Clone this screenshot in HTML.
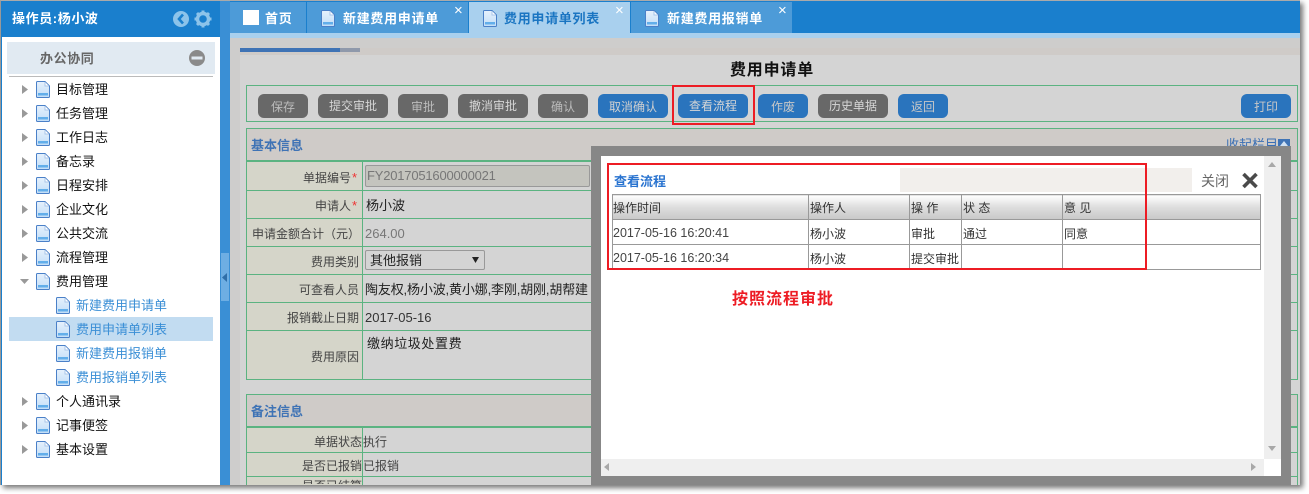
<!DOCTYPE html>
<html><head><meta charset="utf-8">
<style>
html,body{margin:0;padding:0;background:#fff;width:1309px;height:494px;overflow:hidden}
*{box-sizing:border-box}
body{font-family:"Liberation Sans","WenQuanYi Zen Hei","Noto Sans CJK SC",sans-serif;font-size:13px;color:#333}
.a{position:absolute}
.t{position:absolute;white-space:nowrap}
#win{position:absolute;left:0;top:0;width:1300px;height:485px;background:#cecece;border-top:1px solid #aaa;border-left:1px solid #999;box-shadow:3px 3px 5px #777;overflow:hidden}
.it{position:absolute;white-space:nowrap;font-size:13px;line-height:16px;color:#111}
.ch{color:#3b8fd6}
.btn{position:absolute;top:94px;height:24px;border-radius:6px;color:#d6d6d6;text-align:center;font-size:12px;line-height:25px}
.dim{color:#bcbcbc;line-height:27px}
.g{background:#686868}.b{background:#2a74bd}
.gl{position:absolute;background:#5bb381}
.lb{position:absolute;left:246px;width:115px;text-align:right;font-size:12px;color:#444;white-space:nowrap;overflow:visible}
.val{position:absolute;left:365px;font-size:13px;color:#222;white-space:nowrap}
.tab{position:absolute;top:2px;height:31px;background:#4d9bd8;color:#fff;font-weight:bold;font-size:13px;line-height:33px;letter-spacing:.7px}
.x{position:absolute;color:#fff;font-size:15px;line-height:12px;font-weight:normal;letter-spacing:0}
td{border:1px solid #999;padding:2px 0 0 1px;font-size:12px;color:#333;height:25px;white-space:nowrap;overflow:hidden}
table{border-collapse:collapse;table-layout:fixed}
th{border:1px solid #999;padding:0 0 0 1px;font-size:12px;font-weight:normal;color:#333;text-align:left;height:25px;background:linear-gradient(#fff,#ddd 50%,#c8c8c8)}
</style></head><body>
<div id="win">
<div class="a" style="left:-1px;top:-1px;width:1300px;height:485px">

<!-- sidebar -->
<div class="a" style="left:1px;top:1px;width:219px;height:484px;background:#fff"></div>
<div class="a" style="left:1px;top:1px;width:1px;height:484px;background:#1a7fcd"></div>
<div class="a" style="left:1px;top:1px;width:219px;height:36px;background:#1a7fcd"></div>
<div class="t" style="left:12px;top:11px;color:#fff;font-weight:bold;font-size:13px;line-height:16px;letter-spacing:.6px">操作员:杨小波</div>
<svg class="a" style="left:172px;top:10px" width="40" height="18" viewBox="0 0 40 18">
<circle cx="9" cy="9" r="8" fill="#8cc3ea"/><path d="M11 4.500 7 9l4 4.500" stroke="#1a7fcd" stroke-width="2.600" fill="none"/>
<circle cx="31" cy="9" r="5.500" fill="none" stroke="#8cc3ea" stroke-width="3.400"/>
<path d="M31 .5v3M31 14.500v3M22.500 9h3M36.500 9h3M25 3l2 2M35 13l2 2M37 3l-2 2M27 13l-2 2" stroke="#8cc3ea" stroke-width="3"/>
</svg>
<div class="a" style="left:7px;top:42px;width:208px;height:32px;background:#e1eaf2"></div>
<div class="t" style="left:40px;top:51px;font-weight:bold;color:#666;font-size:13px;line-height:16px;letter-spacing:.6px">办公协同</div>
<svg class="a" style="left:189px;top:50px" width="16" height="16"><circle cx="8" cy="8" r="8" fill="#8a8a8a"/><rect x="2.500" y="6.500" width="11" height="3" fill="#e1eaf2"/></svg>
<div class="a" style="left:9px;top:76px;width:204px;height:1px;background:#bbb"></div>
<div class="a" style="left:9px;top:317px;width:204px;height:24px;background:#c2dcf1"></div>

<svg class="a" style="left:0;top:0" width="220" height="470">
<defs>
<linearGradient id="pf" x1="0" y1="0" x2="0" y2="1"><stop offset="0" stop-color="#e6f1fc"/><stop offset="1" stop-color="#c2def8"/></linearGradient>
<g id="pg"><path d="M.5 1.500q0-1 1-1H9L13.500 5v10.500q0 1-1 1h-11q-1 0-1-1z" fill="url(#pf)" stroke="#4a80c8"/><path d="M9 1V5h4" fill="#fff" stroke="#a9c6ea"/><rect x="2" y="12" width="10" height="2.500" fill="#62aeea"/></g>
<path id="ar" d="M0 0l6 4.500-6 4.500z" fill="#999"/>
</defs>
<use href="#ar" x="22" y="85"/><use href="#pg" x="36" y="81"/>
<use href="#ar" x="22" y="109"/><use href="#pg" x="36" y="105"/>
<use href="#ar" x="22" y="133"/><use href="#pg" x="36" y="129"/>
<use href="#ar" x="22" y="157"/><use href="#pg" x="36" y="153"/>
<use href="#ar" x="22" y="181"/><use href="#pg" x="36" y="177"/>
<use href="#ar" x="22" y="205"/><use href="#pg" x="36" y="201"/>
<use href="#ar" x="22" y="229"/><use href="#pg" x="36" y="225"/>
<use href="#ar" x="22" y="253"/><use href="#pg" x="36" y="249"/>
<path d="M20 279h9l-4.500 5z" fill="#999"/><use href="#pg" x="36" y="273"/>
<use href="#pg" x="56" y="297"/><use href="#pg" x="56" y="321"/><use href="#pg" x="56" y="345"/><use href="#pg" x="56" y="369"/>
<use href="#ar" x="22" y="397"/><use href="#pg" x="36" y="393"/>
<use href="#ar" x="22" y="421"/><use href="#pg" x="36" y="417"/>
<use href="#ar" x="22" y="445"/><use href="#pg" x="36" y="441"/>
</svg>
<div class="it" style="left:56px;top:82px">目标管理</div>
<div class="it" style="left:56px;top:106px">任务管理</div>
<div class="it" style="left:56px;top:130px">工作日志</div>
<div class="it" style="left:56px;top:154px">备忘录</div>
<div class="it" style="left:56px;top:178px">日程安排</div>
<div class="it" style="left:56px;top:202px">企业文化</div>
<div class="it" style="left:56px;top:226px">公共交流</div>
<div class="it" style="left:56px;top:250px">流程管理</div>
<div class="it" style="left:56px;top:274px">费用管理</div>
<div class="it ch" style="left:76px;top:298px">新建费用申请单</div>
<div class="it ch" style="left:76px;top:322px">费用申请单列表</div>
<div class="it ch" style="left:76px;top:346px">新建费用报销单</div>
<div class="it ch" style="left:76px;top:370px">费用报销单列表</div>
<div class="it" style="left:56px;top:394px">个人通讯录</div>
<div class="it" style="left:56px;top:418px">记事便签</div>
<div class="it" style="left:56px;top:442px">基本设置</div>

<!-- splitter -->
<div class="a" style="left:220px;top:1px;width:10px;height:484px;background:#3a8fd5"></div>
<div class="a" style="left:221px;top:253px;width:8px;height:48px;background:#6eaee3"></div>
<svg class="a" style="left:222px;top:273px" width="6" height="9"><path d="M5 0v9L0 4.500z" fill="#2f6ea8"/></svg>

<!-- top tab bar -->
<div class="a" style="left:230px;top:1px;width:1071px;height:32px;background:#1a7fcd"></div>
<div class="a" style="left:230px;top:33px;width:1071px;height:5px;background:#a9d0ee"></div>
<div class="tab" style="left:230px;width:76px;padding-left:35px">首页</div>
<div class="a" style="left:243px;top:10px;width:16px;height:15px;background:#fff"></div>
<div class="tab" style="left:307px;width:161px;padding-left:36px">新建费用申请单<span class="x" style="left:147px;top:3px">×</span></div>
<div class="tab" style="left:469px;width:161px;height:36px;padding-left:35px;background:#a9d0ee;color:#1a75c2">费用申请单列表<span class="x" style="left:146px;top:3px">×</span></div>
<div class="tab" style="left:631px;width:161px;padding-left:36px">新建费用报销单<span class="x" style="left:147px;top:3px">×</span></div>
<svg class="a" style="left:321px;top:10px" width="14" height="17"><use href="#pg"/></svg>
<svg class="a" style="left:483px;top:10px" width="14" height="17"><use href="#pg"/></svg>
<svg class="a" style="left:645px;top:10px" width="14" height="17"><use href="#pg"/></svg>

<!-- content -->
<div class="a" style="left:230px;top:38px;width:1071px;height:447px;background:#cecdcc"></div>
<div class="a" style="left:240px;top:48px;width:1060px;height:7px;background:#cfcbc8"></div>
<div class="a" style="left:240px;top:48px;width:100px;height:4px;background:#3f73b5"></div>
<div class="a" style="left:340px;top:48px;width:20px;height:4px;background:#8f99ab"></div>
<div class="a" style="left:240px;top:55px;width:1060px;height:430px;background:#d4d4d4"></div>
<div class="t" style="left:730px;top:62px;font-size:16px;line-height:18px;font-weight:bold;color:#111;letter-spacing:.8px">费用申请单</div>

<!-- toolbar -->
<div class="a" style="left:246px;top:85px;width:1052px;height:37px;border:1px solid #5bb381"></div>
<div class="btn g dim" style="left:258px;width:50px">保存</div>
<div class="btn g" style="left:318px;width:70px">提交审批</div>
<div class="btn g dim" style="left:398px;width:50px">审批</div>
<div class="btn g" style="left:458px;width:70px">撤消审批</div>
<div class="btn g dim" style="left:538px;width:50px">确认</div>
<div class="btn b dim" style="left:598px;width:70px;color:#d0d0d0">取消确认</div>
<div class="btn b" style="left:678px;width:70px">查看流程</div>
<div class="btn b dim" style="left:758px;width:50px;color:#c8c8c8">作废</div>
<div class="btn g" style="left:818px;width:70px">历史单据</div>
<div class="btn b dim" style="left:898px;width:50px;color:#c8c8c8">返回</div>
<div class="btn b dim" style="left:1241px;width:50px;color:#c8c8c8">打印</div>
<div class="a" style="left:672px;top:85px;width:83px;height:40px;border:2px solid #ed1c24"></div>

<!-- section 1 -->
<div class="a" style="left:246px;top:128px;width:1052px;height:34px;background:#cfcbc8;border:1px solid #5bb381;border-bottom:2px solid #5bb381"></div>
<div class="t" style="left:251px;top:138px;color:#3f73b5;font-weight:bold;font-size:13px;line-height:16px">基本信息</div>
<div class="t" style="left:1226px;top:137px;color:#3a6fb5;font-size:13px;line-height:16px">收起栏目</div>
<div class="a" style="left:1278px;top:139px;width:12px;height:12px;background:#3f73b5"></div>
<svg class="a" style="left:1280px;top:141px" width="8" height="5"><path d="M0 5h8L4 0z" fill="#cfe0f2"/></svg>
<div class="a" style="left:246px;top:162px;width:116px;height:217px;background:#d5d5c9"></div>
<div class="gl" style="left:246px;top:128px;width:1px;height:252px"></div>
<div class="gl" style="left:362px;top:162px;width:1px;height:218px"></div>
<div class="gl" style="left:1297px;top:128px;width:1px;height:252px"></div>
<div class="gl" style="left:246px;top:190px;width:1052px;height:1px"></div>
<div class="gl" style="left:246px;top:218px;width:1052px;height:1px"></div>
<div class="gl" style="left:246px;top:246px;width:1052px;height:1px"></div>
<div class="gl" style="left:246px;top:274px;width:1052px;height:1px"></div>
<div class="gl" style="left:246px;top:302px;width:1052px;height:1px"></div>
<div class="gl" style="left:246px;top:330px;width:1052px;height:1px"></div>
<div class="gl" style="left:246px;top:379px;width:1052px;height:1px"></div>

<div class="lb" style="top:171px;width:105px;line-height:14px">单据编号</div><div class="t" style="left:352px;top:171px;color:#e33;font-size:13px;line-height:14px">*</div>
<div class="lb" style="top:199px;width:105px;line-height:14px">申请人</div><div class="t" style="left:352px;top:199px;color:#e33;font-size:13px;line-height:14px">*</div>
<div class="lb" style="top:227px;line-height:14px;left:240px;width:121px;text-align:left;padding-left:12px">申请金额合计（元）</div>
<div class="lb" style="top:255px;width:113px;line-height:14px">费用类别</div>
<div class="lb" style="top:283px;width:113px;line-height:14px">可查看人员</div>
<div class="lb" style="top:311px;width:113px;line-height:14px">报销截止日期</div>
<div class="lb" style="top:350px;width:113px;line-height:14px">费用原因</div>

<div class="a" style="left:365px;top:165px;width:225px;height:22px;background:#c4c4be;border:1px solid #999;border-radius:2px;color:#777;font-size:13px;line-height:20px;padding-left:1px;letter-spacing:-.2px">FY2017051600000021</div>
<div class="val" style="top:198px;left:366px;line-height:16px">杨小波</div>
<div class="t" style="left:365px;top:226px;font-size:13px;line-height:16px;color:#777">264.00</div>
<div class="a" style="left:365px;top:250px;width:120px;height:20px;border:1px solid #999;border-radius:2px;font-size:13px;line-height:20px;padding-left:4px;color:#222">其他报销<svg class="a" style="left:106px;top:6px" width="7" height="6"><path d="M0 0h7L3.500 6z" fill="#222"/></svg></div>
<div class="val" style="top:282px;line-height:16px;letter-spacing:-.15px">陶友权,杨小波,黄小娜,李刚,胡刚,胡帮建</div>
<div class="t" style="left:365px;top:310px;font-size:13px;line-height:16px;color:#333">2017-05-16</div>
<div class="val" style="top:336px;left:367px;line-height:16px;color:#222;letter-spacing:.6px">缴纳垃圾处置费</div>

<!-- section 2 -->
<div class="a" style="left:246px;top:394px;width:1052px;height:34px;background:#cfcbc8;border:1px solid #5bb381;border-bottom:2px solid #5bb381"></div>
<div class="t" style="left:251px;top:404px;color:#3f73b5;font-weight:bold;font-size:13px;line-height:16px">备注信息</div>
<div class="a" style="left:246px;top:428px;width:116px;height:57px;background:#d5d5c9"></div>
<div class="gl" style="left:246px;top:394px;width:1px;height:91px"></div>
<div class="gl" style="left:362px;top:428px;width:1px;height:57px"></div>
<div class="gl" style="left:1297px;top:394px;width:1px;height:91px"></div>
<div class="gl" style="left:246px;top:452px;width:1052px;height:1px"></div>
<div class="gl" style="left:246px;top:476px;width:1052px;height:1px"></div>
<div class="lb" style="top:435px;width:116px;line-height:14px">单据状态</div><div class="t" style="left:363px;top:435px;font-size:12px;line-height:14px;color:#444">执行</div>
<div class="lb" style="top:459px;width:116px;line-height:14px">是否已报销</div><div class="t" style="left:363px;top:459px;font-size:12px;line-height:14px;color:#444">已报销</div>
<div class="lb" style="top:479px;width:116px;line-height:14px;height:5px;overflow:hidden">是否已结算</div>

<!-- modal -->
<div class="a" style="left:591px;top:146px;width:700px;height:339px;background:#878787"></div>
<div class="a" style="left:601px;top:156px;width:680px;height:320px;background:#fff"></div>
<div class="a" style="left:1264px;top:156px;width:17px;height:303px;background:#efefef"></div>
<div class="a" style="left:601px;top:459px;width:663px;height:17px;background:#efefef"></div>
<svg class="a" style="left:601px;top:156px" width="680" height="320">
<path d="M667 11h8l-4-5zM667 290h8l-4 5z" fill="#a8a8a8"/>
<path d="M8 307v8l-5-4zM650 307v8l5-4z" fill="#a8a8a8"/>
</svg>
<div class="a" style="left:900px;top:168px;width:292px;height:24px;background:#f2efec"></div>
<div class="t" style="left:614px;top:174px;color:#2a74d0;font-weight:bold;font-size:13px;line-height:16px">查看流程</div>
<div class="t" style="left:1201px;top:173px;color:#666;font-size:14px;line-height:16px">关闭</div>
<svg class="a" style="left:1241px;top:172px" width="18" height="17"><path d="M2.500 2l13 13M15.500 2l-13 13" stroke="#4a4a4a" stroke-width="3.600"/></svg>
<table class="a" style="left:612px;top:194px;width:649px">
<colgroup><col style="width:196px"><col style="width:101px"><col style="width:52px"><col style="width:101px"><col></colgroup>
<tr><th style="padding-left:0">操作时间</th><th>操作人</th><th>操 作</th><th>状 态</th><th>意 见</th></tr>
<tr><td style="font-size:12.500px;padding-left:0;color:#444">2017-05-16 16:20:41</td><td>杨小波</td><td>审批</td><td>通过</td><td>同意</td></tr>
<tr><td style="font-size:12.500px;padding-left:0;color:#444">2017-05-16 16:20:34</td><td>杨小波</td><td>提交审批</td><td></td><td></td></tr>
</table>
<div class="a" style="left:607px;top:163px;width:540px;height:107px;border:2px solid #ed1c24"></div>
<div class="t" style="left:732px;top:291px;color:#ed1c24;font-weight:bold;font-size:16px;line-height:18px;letter-spacing:1px">按照流程审批</div>
</div>
</div>
</body></html>
